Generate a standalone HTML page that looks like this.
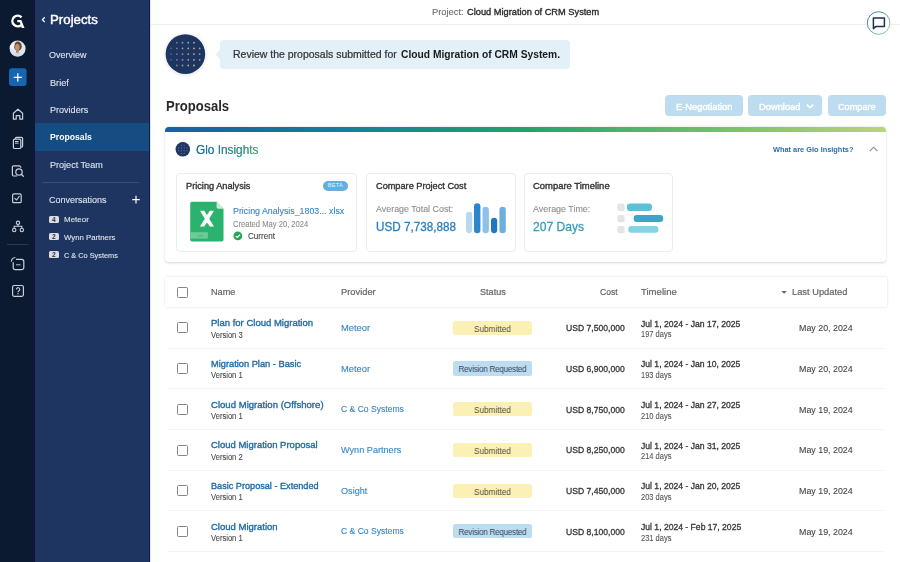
<!DOCTYPE html>
<html><head><meta charset="utf-8"><title>Proposals</title><style>
*{margin:0;padding:0;box-sizing:border-box}
html,body{width:900px;height:562px;overflow:hidden;background:#fff;font-family:"Liberation Sans", sans-serif}
.abs{position:absolute}
.t{position:absolute;white-space:nowrap;line-height:1;}
.badge{left:48.8px;width:10px;height:7.2px;background:#d9dee6;border-radius:1.5px;color:#333;font-size:6.5px;line-height:7.2px;text-align:center;font-weight:700}
.btn{top:94.7px;height:21.8px;border-radius:4px;background:#bddcef}
.card{top:172.6px;height:79px;border:1px solid #ececec;border-radius:4px;background:#fff}
.cb{width:11px;height:11px;border:1.5px solid #858585;border-radius:1.5px}
.pill{left:452.7px;width:79.5px;height:14.2px;border-radius:2.5px;font-size:8.2px;line-height:17.2px;text-align:center;white-space:nowrap}
</style></head>
<body>
<div class="abs" style="left:0;top:0;width:35px;height:562px;background:#0b1a31"></div>
<div class="abs" style="left:32px;top:0;width:3px;height:562px;background:#0c1838"></div>
<div class="abs" style="left:35px;top:0;width:2px;height:562px;background:#233258"></div>
<div class="abs" style="left:37px;top:0;width:113px;height:562px;background:#1d3560"></div>
<div class="abs" style="left:35px;top:123px;width:115px;height:27.5px;background:#154c82"></div>
<div class="abs" style="left:149px;top:0;width:1px;height:562px;background:#102045"></div>

<svg class="abs" style="left:0;top:0" width="35" height="562" viewBox="0 0 35 562">
  <!-- G logo -->
  <path d="M21.5 17.3 A5.3 5.3 0 1 0 21.4 24.8" fill="none" stroke="#fff" stroke-width="2.4"/>
  <path d="M17.3 20.0 H21.3 L24.5 27.9 H21.7 L19.9 22.3 H17.3 Z" fill="#fff"/>
  <!-- plus btn -->
  <rect x="9" y="68.3" width="17.6" height="17.6" rx="3" fill="#1565b0"/>
  <path d="M17.8 73.3v8.2M13.7 77.4h8.2" stroke="#fff" stroke-width="1.3"/>
  <!-- home -->
  <path d="M13.4 119.2 V113.2 L18 109.2 L22.6 113.2 V119.2 H19.8 V115.6 H16.2 V119.2 Z" fill="none" stroke="#c9cfdb" stroke-width="1.2" stroke-linejoin="round"/>
  <!-- docs -->
  <rect x="13.4" y="139.2" width="7.4" height="9.3" rx="1.3" fill="none" stroke="#c9cfdb" stroke-width="1.2"/>
  <path d="M15.4 139 V138.6 a1.2 1.2 0 0 1 1.2-1.2 H21.4 a1.2 1.2 0 0 1 1.2 1.2 V146 a1.2 1.2 0 0 1 -1.2 1.2 H21" fill="none" stroke="#c9cfdb" stroke-width="1.2"/>
  <path d="M15 141.5 h3.5 M15 143.2 h3.5" stroke="#c9cfdb" stroke-width="1"/>
  <!-- search doc -->
  <path d="M17 176 H13.6 a1.2 1.2 0 0 1 -1.2 -1.2 V167 a1.2 1.2 0 0 1 1.2 -1.2 H19.6 L21.2 167.6" fill="none" stroke="#c9cfdb" stroke-width="1.2"/>
  <circle cx="19" cy="172" r="3.2" fill="none" stroke="#c9cfdb" stroke-width="1.2"/>
  <path d="M21.3 174.3 L23.3 176.3" stroke="#c9cfdb" stroke-width="1.3" stroke-linecap="round"/>
  <!-- checkbox -->
  <rect x="12.6" y="193.9" width="8.6" height="8.8" rx="1.3" fill="none" stroke="#c9cfdb" stroke-width="1.2"/>
  <path d="M14.8 198.4 L16.6 200 L19.2 196.4" fill="none" stroke="#c9cfdb" stroke-width="1.1" stroke-linecap="round" stroke-linejoin="round"/>
  <!-- org chart -->
  <circle cx="18" cy="222.8" r="1.7" fill="none" stroke="#c9cfdb" stroke-width="1.1"/>
  <circle cx="14.2" cy="230" r="1.7" fill="none" stroke="#c9cfdb" stroke-width="1.1"/>
  <circle cx="21.8" cy="230" r="1.7" fill="none" stroke="#c9cfdb" stroke-width="1.1"/>
  <path d="M18 224.5 V226.3 M14.2 228.3 V226.3 H21.8 V228.3" fill="none" stroke="#c9cfdb" stroke-width="1.1"/>
  <!-- separator -->
  <path d="M7 244.5 H28.5" stroke="#2a3a57" stroke-width="1"/>
  <!-- chat rotate -->
  <path d="M16 259.4 H21.7 a2.1 2.1 0 0 1 2.1 2.1 V267.6 a2.1 2.1 0 0 1 -2.1 2.1 H15.3 a2.1 2.1 0 0 1 -2.1 -2.1 V262.2" fill="none" stroke="#c9cfdb" stroke-width="1.2"/>
  <path d="M11.3 261.6 a4.6 4.6 0 0 1 4.1 -4.1" fill="none" stroke="#c9cfdb" stroke-width="1.1"/>
  <path d="M16 264.8 h4.6" stroke="#c9cfdb" stroke-width="0.9"/>
  <!-- help -->
  <rect x="12.6" y="285.5" width="10.8" height="10.8" rx="1.5" fill="none" stroke="#c9cfdb" stroke-width="1.2"/>
  <path d="M16.4 289.4 a1.7 1.7 0 1 1 2.6 1.4 c-0.7 0.4 -1 0.8 -1 1.4" fill="none" stroke="#c9cfdb" stroke-width="1.1"/>
  <circle cx="18" cy="293.8" r="0.7" fill="#c9cfdb"/>
</svg>

<svg class="abs" style="left:6px;top:37px" width="23" height="23">
  <defs><clipPath id="avc"><circle cx="11.6" cy="11.6" r="8"/></clipPath></defs>
  <circle cx="11.6" cy="11.6" r="8" fill="#dfe6ee"/>
  <g clip-path="url(#avc)">
    <ellipse cx="11.9" cy="9.2" rx="3.9" ry="4.6" fill="#6e4b34"/>
    <ellipse cx="11.3" cy="10.2" rx="2.2" ry="3.2" fill="#c09474"/>
    <path d="M10.3 12.5 L12.4 12.5 L12.9 16.5 L9.9 16.5 Z" fill="#b0876a"/>
    <ellipse cx="11.6" cy="20" rx="6.5" ry="4.2" fill="#cfdbe8"/>
    <ellipse cx="6" cy="8" rx="2.5" ry="4" fill="#f2f4f7"/>
  </g>
</svg>


<svg class="abs" style="left:35px;top:0" width="115" height="562">
  <path d="M9.7 17.3 L7.4 19.7 L9.7 22.1" fill="none" stroke="#fff" stroke-width="1.3"/>
  <path d="M7 182.6 H104.5" stroke="#3a5080" stroke-width="1"/>
  <path d="M97.2 199.6 h7.6 M101 195.8 v7.6" stroke="#fff" stroke-width="1.2"/>
</svg>
<div class="abs badge" style="top:216px">4</div>
<div class="abs badge" style="top:233.2px">2</div>
<div class="abs badge" style="top:251px">2</div>


<div class="abs" style="left:150px;top:0;width:1px;height:562px;background:#dce3f0"></div>
<div class="abs" style="left:151px;top:23.5px;width:749px;height:1px;background:#eeeeee"></div>
<svg class="abs" style="left:860px;top:5px" width="40" height="40">
  <defs><linearGradient id="cg" x1="0" y1="0" x2="1" y2="1"><stop offset="0" stop-color="#2d6fb0"/><stop offset="1" stop-color="#9fd19a"/></linearGradient></defs>
  <circle cx="18.6" cy="18" r="11.3" fill="#fff" stroke="url(#cg)" stroke-width="1"/>
  <path d="M13.4 13 H24.4 V21.6 H15.6 L13.4 23.6 Z" fill="none" stroke="#1f2e56" stroke-width="1.5" stroke-linejoin="round"/>
</svg>
<svg class="abs" style="left:160px;top:29px" width="52" height="52">
  <defs><filter id="sh" x="-30%" y="-30%" width="160%" height="160%"><feGaussianBlur stdDeviation="1.5"/></filter></defs>
  <circle cx="25.4" cy="25.6" r="20.6" fill="#000" opacity="0.12" filter="url(#sh)"/>
  <circle cx="25.4" cy="25.1" r="20.4" fill="#fff"/>
  <circle cx="25.4" cy="25.1" r="19.8" fill="#1e3461"/>
  <circle cx="16.85" cy="13.70" r="0.9" fill="#74859a"/><circle cx="22.55" cy="13.70" r="0.9" fill="#96a08e"/><circle cx="28.25" cy="13.70" r="0.9" fill="#abaf88"/><circle cx="33.95" cy="13.70" r="0.9" fill="#bbb682"/><circle cx="11.15" cy="19.40" r="0.9" fill="#53698f"/><circle cx="16.85" cy="19.40" r="0.9" fill="#74859a"/><circle cx="22.55" cy="19.40" r="0.9" fill="#96a08e"/><circle cx="28.25" cy="19.40" r="0.9" fill="#abaf88"/><circle cx="33.95" cy="19.40" r="0.9" fill="#bbb682"/><circle cx="39.65" cy="19.40" r="0.9" fill="#aaa37e"/><circle cx="11.15" cy="25.10" r="0.9" fill="#53698f"/><circle cx="16.85" cy="25.10" r="0.9" fill="#74859a"/><circle cx="22.55" cy="25.10" r="0.9" fill="#96a08e"/><circle cx="28.25" cy="25.10" r="0.9" fill="#abaf88"/><circle cx="33.95" cy="25.10" r="0.9" fill="#bbb682"/><circle cx="39.65" cy="25.10" r="0.9" fill="#aaa37e"/><circle cx="11.15" cy="30.80" r="0.9" fill="#53698f"/><circle cx="16.85" cy="30.80" r="0.9" fill="#74859a"/><circle cx="22.55" cy="30.80" r="0.9" fill="#96a08e"/><circle cx="28.25" cy="30.80" r="0.9" fill="#abaf88"/><circle cx="33.95" cy="30.80" r="0.9" fill="#bbb682"/><circle cx="39.65" cy="30.80" r="0.9" fill="#aaa37e"/><circle cx="16.85" cy="36.50" r="0.9" fill="#74859a"/><circle cx="22.55" cy="36.50" r="0.9" fill="#96a08e"/><circle cx="28.25" cy="36.50" r="0.9" fill="#abaf88"/><circle cx="33.95" cy="36.50" r="0.9" fill="#bbb682"/>
</svg>
<div class="abs" style="left:220px;top:40.3px;width:350px;height:28.5px;background:#e3f0f8;border-radius:4px"></div>
<svg class="abs" style="left:212px;top:45px" width="10" height="18"><path d="M8.5 3.5 L3.8 9.4 L8.5 15.3 Z" fill="#e4f0f9"/></svg>


<div class="abs btn" style="left:665px;width:77.5px"></div>
<div class="abs btn" style="left:748px;width:74.2px"></div>
<div class="abs btn" style="left:827.5px;width:58.5px"></div>
<svg class="abs" style="left:800px;top:95px" width="20" height="22"><path d="M6.8 9.6 L10 12.6 L13.2 9.6" fill="none" stroke="#fff" stroke-width="1.5"/></svg>


<div class="abs" style="left:165px;top:127px;width:721px;height:135px;border-radius:4px;background:#fff;box-shadow:0 0.6px 2.5px rgba(0,0,0,0.17)"></div>
<div class="abs" style="left:165px;top:127px;width:721px;height:5px;border-radius:4px 4px 0 0;background:linear-gradient(90deg,#1860a2 0%,#137f98 25%,#22a36b 50%,#70bd6d 75%,#bdd27b 100%)"></div>
<svg class="abs" style="left:170px;top:137px" width="26" height="26">
  <circle cx="12.8" cy="12.3" r="7.9" fill="#eef2f7"/>
  <circle cx="12.8" cy="12.3" r="7.2" fill="#1e3461"/>
  <circle cx="11.43" cy="8.18" r="0.7" fill="#4f6d99"/><circle cx="14.18" cy="8.18" r="0.7" fill="#4f6d99"/><circle cx="8.68" cy="10.93" r="0.7" fill="#4f6d99"/><circle cx="11.43" cy="10.93" r="0.7" fill="#4f6d99"/><circle cx="14.18" cy="10.93" r="0.7" fill="#4f6d99"/><circle cx="16.93" cy="10.93" r="0.7" fill="#4f6d99"/><circle cx="8.68" cy="13.68" r="0.7" fill="#4f6d99"/><circle cx="11.43" cy="13.68" r="0.7" fill="#4f6d99"/><circle cx="14.18" cy="13.68" r="0.7" fill="#4f6d99"/><circle cx="16.93" cy="13.68" r="0.7" fill="#4f6d99"/><circle cx="11.43" cy="16.43" r="0.7" fill="#4f6d99"/><circle cx="14.18" cy="16.43" r="0.7" fill="#4f6d99"/>
</svg>
<svg class="abs" style="left:860px;top:140px" width="24" height="20"><path d="M9.8 11.2 L13.6 7.2 L17.4 11.2" fill="none" stroke="#8a8a8a" stroke-width="1.1"/></svg>
<div class="abs card" style="left:175.9px;width:181.5px"></div>
<div class="abs card" style="left:365.5px;width:150px"></div>
<div class="abs card" style="left:523.8px;width:149.2px"></div>
<div class="abs" style="left:322.8px;top:181.3px;width:25.3px;height:9.5px;border-radius:5px;background:#62afe0;color:#e6f3fb;font-size:5.6px;line-height:9.5px;text-align:center;font-weight:400;letter-spacing:0.3px">BETA</div>
<svg class="abs" style="left:188px;top:200px" width="40" height="45">
  <path d="M4 1.8 H28.6 L35.5 8.7 V39.8 a1.8 1.8 0 0 1 -1.8 1.8 H4 a1.8 1.8 0 0 1 -1.8 -1.8 V3.6 a1.8 1.8 0 0 1 1.8 -1.8 Z" fill="#2bb26f"/>
  <path d="M28.6 1.8 V7 a1.7 1.7 0 0 0 1.7 1.7 H35.5 Z" fill="#cfe9d9"/>
  <path d="M2.2 32.2 H19.9 V38.6 H2.2 Z" fill="#6ccb98"/>
  <path d="M10 35.8 h5" stroke="#4aa878" stroke-width="0.8"/>
  <path d="M12 10.8 L16.2 10.8 L19 14.9 L21.8 10.8 L26 10.8 L21.2 18.7 L26 26.6 L21.8 26.6 L19 22.5 L16.2 26.6 L12 26.6 L16.8 18.7 Z" fill="#fff"/>
</svg>
<svg class="abs" style="left:230px;top:228px" width="16" height="16"><circle cx="7.85" cy="7.9" r="4.4" fill="#2aa35a"/><path d="M5.7 8 L7.3 9.5 L10.1 6.6" fill="none" stroke="#fff" stroke-width="1.2"/></svg>
<svg class="abs" style="left:462px;top:200px" width="50" height="38">
  <rect x="4" y="11.8" width="6.2" height="21.4" rx="3.1" fill="#b9d8ef"/>
  <rect x="12" y="3.2" width="6.4" height="30" rx="3.2" fill="#2b86cb"/>
  <rect x="20.5" y="6.8" width="6.4" height="26.4" rx="3.2" fill="#8fc1e6"/>
  <rect x="29" y="17.8" width="6.2" height="15.4" rx="3.1" fill="#1f78bf"/>
  <rect x="37.4" y="6.8" width="6.4" height="26.4" rx="3.2" fill="#6db0e0"/>
</svg>
<svg class="abs" style="left:614px;top:200px" width="52" height="36">
  <rect x="3.3" y="3.6" width="7.3" height="7.3" rx="2" fill="#e4e4e4"/>
  <rect x="3.3" y="14.9" width="7.3" height="7.3" rx="2" fill="#e4e4e4"/>
  <rect x="3.3" y="26" width="7.3" height="7.3" rx="2" fill="#e4e4e4"/>
  <rect x="12.9" y="3.5" width="25.1" height="7.4" rx="3.2" fill="#5cc1d7"/>
  <rect x="19.7" y="14.9" width="29.5" height="7" rx="3" fill="#3ba7c5"/>
  <rect x="14.3" y="26" width="30.1" height="6.8" rx="3" fill="#82d3e3"/>
</svg>

<div class="abs" style="left:165px;top:277px;width:721.5px;height:30.3px;background:#fff;border-radius:1px;box-shadow:0 0 2.5px rgba(0,0,0,0.16)"></div><div class="abs cb" style="left:177.2px;top:286.80px"></div><svg class="abs" style="left:778px;top:287px" width="12" height="10"><path d="M3.4 4 H8.8 L6.1 6.8 Z" fill="#666"/></svg><div class="abs cb" style="left:177.2px;top:322.40px"></div><div class="abs" style="left:168px;top:347.50px;width:716px;height:1px;background:#f4f4f4"></div><div class="abs pill" style="top:320.70px;background:#fbf1b4;color:#57523f;letter-spacing:0">Submitted</div><div class="abs cb" style="left:177.2px;top:363.10px"></div><div class="abs" style="left:168px;top:388.20px;width:716px;height:1px;background:#f4f4f4"></div><div class="abs pill" style="top:361.40px;background:#bcdcf0;color:#3a4d66;letter-spacing:-0.3px">Revision Requested</div><div class="abs cb" style="left:177.2px;top:403.80px"></div><div class="abs" style="left:168px;top:428.90px;width:716px;height:1px;background:#f4f4f4"></div><div class="abs pill" style="top:402.10px;background:#fbf1b4;color:#57523f;letter-spacing:0">Submitted</div><div class="abs cb" style="left:177.2px;top:444.50px"></div><div class="abs" style="left:168px;top:469.60px;width:716px;height:1px;background:#f4f4f4"></div><div class="abs pill" style="top:442.80px;background:#fbf1b4;color:#57523f;letter-spacing:0">Submitted</div><div class="abs cb" style="left:177.2px;top:485.20px"></div><div class="abs" style="left:168px;top:510.30px;width:716px;height:1px;background:#f4f4f4"></div><div class="abs pill" style="top:483.50px;background:#fbf1b4;color:#57523f;letter-spacing:0">Submitted</div><div class="abs cb" style="left:177.2px;top:525.90px"></div><div class="abs" style="left:168px;top:551.00px;width:716px;height:1px;background:#f4f4f4"></div><div class="abs pill" style="top:524.20px;background:#bcdcf0;color:#3a4d66;letter-spacing:-0.3px">Revision Requested</div>
<span class="t" id="t0" style="left:49.70px;top:14.41px;font-size:12.8px;font-weight:400;color:#ffffff;-webkit-text-stroke:0.4px #ffffff;transform:scaleX(1.0363);transform-origin:-0.0px 0;">Projects</span>
<span class="t" id="t1" style="left:49.30px;top:50.21px;font-size:9.4px;font-weight:400;color:#dfe4ee;-webkit-text-stroke:0.1px #dfe4ee;transform:scaleX(0.9593);transform-origin:-0.0px 0;">Overview</span>
<span class="t" id="t2" style="left:49.50px;top:77.51px;font-size:9.4px;font-weight:400;color:#dfe4ee;-webkit-text-stroke:0.1px #dfe4ee;transform:scaleX(0.9762);transform-origin:-0.0px 0;">Brief</span>
<span class="t" id="t3" style="left:49.50px;top:104.51px;font-size:9.4px;font-weight:400;color:#dfe4ee;-webkit-text-stroke:0.1px #dfe4ee;transform:scaleX(0.9645);transform-origin:-0.0px 0;">Providers</span>
<span class="t" id="t4" style="left:49.50px;top:132.21px;font-size:9.4px;font-weight:700;color:#ffffff;transform:scaleX(0.9241);transform-origin:-0.0px 0;">Proposals</span>
<span class="t" id="t5" style="left:49.50px;top:159.91px;font-size:9.4px;font-weight:400;color:#dfe4ee;-webkit-text-stroke:0.1px #dfe4ee;transform:scaleX(0.9670);transform-origin:-0.0px 0;">Project Team</span>
<span class="t" id="t6" style="left:49.20px;top:194.91px;font-size:9.4px;font-weight:400;color:#dfe4ee;-webkit-text-stroke:0.1px #dfe4ee;transform:scaleX(0.9607);transform-origin:-0.0px 0;">Conversations</span>
<span class="t" id="t7" style="left:63.90px;top:216.31px;font-size:7.8px;font-weight:400;color:#dfe4ee;-webkit-text-stroke:0.1px #dfe4ee;transform:scaleX(1.0223);transform-origin:-0.0px 0;">Meteor</span>
<span class="t" id="t8" style="left:63.90px;top:233.81px;font-size:7.8px;font-weight:400;color:#dfe4ee;-webkit-text-stroke:0.1px #dfe4ee;transform:scaleX(0.9977);transform-origin:-0.0px 0;">Wynn Partners</span>
<span class="t" id="t9" style="left:63.90px;top:251.51px;font-size:7.8px;font-weight:400;color:#dfe4ee;-webkit-text-stroke:0.1px #dfe4ee;transform:scaleX(0.9422);transform-origin:-0.0px 0;">C &amp; Co Systems</span>
<span class="t" id="t10" style="left:432.20px;top:7.80px;font-size:9.3px;font-weight:400;color:#6b6b6b;-webkit-text-stroke:0.1px #6b6b6b;transform:scaleX(1.0023);transform-origin:-0.0px 0;">Project:</span>
<span class="t" id="t11" style="left:466.70px;top:7.80px;font-size:9.3px;font-weight:400;color:#2b2b2b;-webkit-text-stroke:0.35px #2b2b2b;transform:scaleX(0.9955);transform-origin:-0.0px 0;">Cloud Migration of CRM System</span>
<span class="t" id="t12" style="left:233.40px;top:49.81px;font-size:10.0px;font-weight:400;color:#333333;-webkit-text-stroke:0.22px #333333;transform:scaleX(1.0485);transform-origin:-0.0px 0;">Review the proposals submitted for</span>
<span class="t" id="t13" style="left:401.00px;top:49.81px;font-size:10.0px;font-weight:700;color:#1a1a1a;transform:scaleX(1.0258);transform-origin:-0.0px 0;">Cloud Migration of CRM System.</span>
<span class="t" id="t14" style="left:165.90px;top:99.01px;font-size:14px;font-weight:700;color:#2a2a2a;transform:scaleX(0.9322);transform-origin:-0.0px 0;">Proposals</span>
<span class="t" id="t15" style="left:675.50px;top:101.50px;font-size:9.8px;font-weight:400;color:#ffffff;-webkit-text-stroke:0.4px #ffffff;transform:scaleX(0.9500);transform-origin:-0.0px 0;">E-Negotiation</span>
<span class="t" id="t16" style="left:758.50px;top:101.50px;font-size:9.8px;font-weight:400;color:#ffffff;-webkit-text-stroke:0.4px #ffffff;transform:scaleX(0.9508);transform-origin:-0.0px 0;">Download</span>
<span class="t" id="t17" style="left:837.70px;top:101.50px;font-size:9.8px;font-weight:400;color:#ffffff;-webkit-text-stroke:0.4px #ffffff;transform:scaleX(0.9355);transform-origin:-0.0px 0;">Compare</span>
<span class="t" id="t18" style="left:195.80px;top:144.20px;font-size:12.4px;font-weight:400;color:#1f6fa5;transform:scaleX(0.9547);transform-origin:-0.0px 0;background:linear-gradient(90deg,#1d6aa8,#2f9d8a 70%,#3fae78);-webkit-background-clip:text;background-clip:text;color:transparent;">Glo Insights</span>
<span class="t" id="t19" style="left:196.20px;top:144.20px;font-size:12.4px;font-weight:400;color:#1f6fa5;transform:scaleX(0.9547);transform-origin:-0.0px 0;background:linear-gradient(90deg,#1d6aa8,#2f9d8a 70%,#3fae78);-webkit-background-clip:text;background-clip:text;color:transparent;">Glo Insights</span>
<span class="t" id="t20" style="left:772.80px;top:146.21px;font-size:7.8px;font-weight:700;color:#2a6ea6;transform:scaleX(0.9477);transform-origin:-0.0px 0;">What are Glo Insights?</span>
<span class="t" id="t21" style="left:185.70px;top:181.61px;font-size:9.0px;font-weight:400;color:#333333;-webkit-text-stroke:0.35px #333333;transform:scaleX(1.0222);transform-origin:-0.0px 0;">Pricing Analysis</span>
<span class="t" id="t22" style="left:232.80px;top:206.21px;font-size:9.4px;font-weight:400;color:#3584c4;-webkit-text-stroke:0.1px #3584c4;transform:scaleX(0.9400);transform-origin:-0.0px 0;">Pricing Analysis_1803... xlsx</span>
<span class="t" id="t23" style="left:232.80px;top:219.81px;font-size:8.3px;font-weight:400;color:#8c8c8c;-webkit-text-stroke:0.1px #8c8c8c;transform:scaleX(0.9170);transform-origin:-0.0px 0;">Created May 20, 2024</span>
<span class="t" id="t24" style="left:247.60px;top:232.22px;font-size:8.6px;font-weight:400;color:#444444;-webkit-text-stroke:0.1px #444444;transform:scaleX(0.9416);transform-origin:-0.0px 0;">Current</span>
<span class="t" id="t25" style="left:376.10px;top:181.61px;font-size:9.0px;font-weight:400;color:#333333;-webkit-text-stroke:0.35px #333333;transform:scaleX(1.0195);transform-origin:-0.0px 0;">Compare Project Cost</span>
<span class="t" id="t26" style="left:376.10px;top:204.51px;font-size:9.0px;font-weight:400;color:#8c8c8c;-webkit-text-stroke:0.1px #8c8c8c;transform:scaleX(0.9884);transform-origin:-0.0px 0;">Average Total Cost:</span>
<span class="t" id="t27" style="left:376.10px;top:220.00px;font-size:13px;font-weight:400;color:#2a7fc0;-webkit-text-stroke:0.3px #2a7fc0;transform:scaleX(0.8989);transform-origin:-0.0px 0;">USD 7,738,888</span>
<span class="t" id="t28" style="left:533.30px;top:181.61px;font-size:9.0px;font-weight:400;color:#333333;-webkit-text-stroke:0.35px #333333;transform:scaleX(1.0493);transform-origin:-0.0px 0;">Compare Timeline</span>
<span class="t" id="t29" style="left:533.30px;top:204.51px;font-size:9.0px;font-weight:400;color:#8c8c8c;-webkit-text-stroke:0.1px #8c8c8c;transform:scaleX(0.9902);transform-origin:-0.0px 0;">Average Time:</span>
<span class="t" id="t30" style="left:533.30px;top:220.00px;font-size:13px;font-weight:400;color:#3a9ab8;-webkit-text-stroke:0.3px #3a9ab8;transform:scaleX(0.9307);transform-origin:-0.0px 0;">207 Days</span>
<span class="t" id="t31" style="left:210.70px;top:287.31px;font-size:9.7px;font-weight:400;color:#666666;-webkit-text-stroke:0.22px #666666;transform:scaleX(0.9457);transform-origin:-0.0px 0;">Name</span>
<span class="t" id="t32" style="left:340.80px;top:287.31px;font-size:9.7px;font-weight:400;color:#666666;-webkit-text-stroke:0.22px #666666;transform:scaleX(0.9628);transform-origin:-0.0px 0;">Provider</span>
<span class="t" id="t33" style="left:480.00px;top:287.31px;font-size:9.7px;font-weight:400;color:#666666;-webkit-text-stroke:0.22px #666666;transform:scaleX(0.9380);transform-origin:-0.0px 0;">Status</span>
<span class="t" id="t34" style="left:599.50px;top:287.31px;font-size:9.7px;font-weight:400;color:#666666;-webkit-text-stroke:0.22px #666666;transform:scaleX(0.8832);transform-origin:-0.0px 0;">Cost</span>
<span class="t" id="t35" style="left:640.50px;top:287.31px;font-size:9.7px;font-weight:400;color:#666666;-webkit-text-stroke:0.22px #666666;transform:scaleX(0.9864);transform-origin:-0.0px 0;">Timeline</span>
<span class="t" id="t36" style="left:792.00px;top:287.31px;font-size:9.7px;font-weight:400;color:#666666;-webkit-text-stroke:0.22px #666666;transform:scaleX(0.9614);transform-origin:-0.0px 0;">Last Updated</span>
<span class="t" id="t37" style="left:210.50px;top:318.10px;font-size:9.6px;font-weight:400;color:#1f6aa6;-webkit-text-stroke:0.35px #1f6aa6;transform:scaleX(0.9917);transform-origin:-0.0px 0;">Plan for Cloud Migration</span>
<span class="t" id="t38" style="left:210.50px;top:330.51px;font-size:8.3px;font-weight:400;color:#484848;-webkit-text-stroke:0.1px #484848;transform:scaleX(0.9161);transform-origin:-0.0px 0;">Version 3</span>
<span class="t" id="t39" style="left:340.80px;top:322.81px;font-size:9.5px;font-weight:400;color:#3685c4;-webkit-text-stroke:0.1px #3685c4;transform:scaleX(0.9850);transform-origin:-0.0px 0;">Meteor</span>
<span class="t" id="t40" style="left:565.80px;top:323.10px;font-size:9.6px;font-weight:400;color:#3a3a3a;-webkit-text-stroke:0.35px #3a3a3a;transform:scaleX(0.8953);transform-origin:-0.0px 0;">USD 7,500,000</span>
<span class="t" id="t41" style="left:640.50px;top:318.61px;font-size:9.5px;font-weight:400;color:#3a3a3a;-webkit-text-stroke:0.35px #3a3a3a;transform:scaleX(0.9046);transform-origin:-0.0px 0;">Jul 1, 2024 - Jan 17, 2025</span>
<span class="t" id="t42" style="left:640.50px;top:330.31px;font-size:8.3px;font-weight:400;color:#555555;-webkit-text-stroke:0.1px #555555;transform:scaleX(0.9024);transform-origin:-0.0px 0;">197 days</span>
<span class="t" id="t43" style="left:799.00px;top:323.21px;font-size:9.5px;font-weight:400;color:#444444;-webkit-text-stroke:0.1px #444444;transform:scaleX(0.9329);transform-origin:-0.0px 0;">May 20, 2024</span>
<span class="t" id="t44" style="left:210.50px;top:358.81px;font-size:9.6px;font-weight:400;color:#1f6aa6;-webkit-text-stroke:0.35px #1f6aa6;transform:scaleX(0.9657);transform-origin:-0.0px 0;">Migration Plan - Basic</span>
<span class="t" id="t45" style="left:210.50px;top:371.21px;font-size:8.3px;font-weight:400;color:#484848;-webkit-text-stroke:0.1px #484848;transform:scaleX(0.9161);transform-origin:-0.0px 0;">Version 1</span>
<span class="t" id="t46" style="left:340.80px;top:363.51px;font-size:9.5px;font-weight:400;color:#3685c4;-webkit-text-stroke:0.1px #3685c4;transform:scaleX(0.9850);transform-origin:-0.0px 0;">Meteor</span>
<span class="t" id="t47" style="left:565.80px;top:363.81px;font-size:9.6px;font-weight:400;color:#3a3a3a;-webkit-text-stroke:0.35px #3a3a3a;transform:scaleX(0.8953);transform-origin:-0.0px 0;">USD 6,900,000</span>
<span class="t" id="t48" style="left:640.50px;top:359.31px;font-size:9.5px;font-weight:400;color:#3a3a3a;-webkit-text-stroke:0.35px #3a3a3a;transform:scaleX(0.9046);transform-origin:-0.0px 0;">Jul 1, 2024 - Jan 10, 2025</span>
<span class="t" id="t49" style="left:640.50px;top:371.01px;font-size:8.3px;font-weight:400;color:#555555;-webkit-text-stroke:0.1px #555555;transform:scaleX(0.9024);transform-origin:-0.0px 0;">193 days</span>
<span class="t" id="t50" style="left:799.00px;top:363.91px;font-size:9.5px;font-weight:400;color:#444444;-webkit-text-stroke:0.1px #444444;transform:scaleX(0.9329);transform-origin:-0.0px 0;">May 20, 2024</span>
<span class="t" id="t51" style="left:210.50px;top:399.51px;font-size:9.6px;font-weight:400;color:#1f6aa6;-webkit-text-stroke:0.35px #1f6aa6;transform:scaleX(0.9974);transform-origin:-0.0px 0;">Cloud Migration (Offshore)</span>
<span class="t" id="t52" style="left:210.50px;top:411.91px;font-size:8.3px;font-weight:400;color:#484848;-webkit-text-stroke:0.1px #484848;transform:scaleX(0.9161);transform-origin:-0.0px 0;">Version 1</span>
<span class="t" id="t53" style="left:340.80px;top:404.21px;font-size:9.5px;font-weight:400;color:#3685c4;-webkit-text-stroke:0.1px #3685c4;transform:scaleX(0.9028);transform-origin:-0.0px 0;">C &amp; Co Systems</span>
<span class="t" id="t54" style="left:565.80px;top:404.51px;font-size:9.6px;font-weight:400;color:#3a3a3a;-webkit-text-stroke:0.35px #3a3a3a;transform:scaleX(0.8953);transform-origin:-0.0px 0;">USD 8,750,000</span>
<span class="t" id="t55" style="left:640.50px;top:400.01px;font-size:9.5px;font-weight:400;color:#3a3a3a;-webkit-text-stroke:0.35px #3a3a3a;transform:scaleX(0.9046);transform-origin:-0.0px 0;">Jul 1, 2024 - Jan 27, 2025</span>
<span class="t" id="t56" style="left:640.50px;top:411.71px;font-size:8.3px;font-weight:400;color:#555555;-webkit-text-stroke:0.1px #555555;transform:scaleX(0.9024);transform-origin:-0.0px 0;">210 days</span>
<span class="t" id="t57" style="left:799.00px;top:404.61px;font-size:9.5px;font-weight:400;color:#444444;-webkit-text-stroke:0.1px #444444;transform:scaleX(0.9329);transform-origin:-0.0px 0;">May 19, 2024</span>
<span class="t" id="t58" style="left:210.50px;top:440.20px;font-size:9.6px;font-weight:400;color:#1f6aa6;-webkit-text-stroke:0.35px #1f6aa6;transform:scaleX(0.9893);transform-origin:-0.0px 0;">Cloud Migration Proposal</span>
<span class="t" id="t59" style="left:210.50px;top:452.61px;font-size:8.3px;font-weight:400;color:#484848;-webkit-text-stroke:0.1px #484848;transform:scaleX(0.9161);transform-origin:-0.0px 0;">Version 2</span>
<span class="t" id="t60" style="left:340.80px;top:444.91px;font-size:9.5px;font-weight:400;color:#3685c4;-webkit-text-stroke:0.1px #3685c4;transform:scaleX(0.9610);transform-origin:-0.0px 0;">Wynn Partners</span>
<span class="t" id="t61" style="left:565.80px;top:445.20px;font-size:9.6px;font-weight:400;color:#3a3a3a;-webkit-text-stroke:0.35px #3a3a3a;transform:scaleX(0.8953);transform-origin:-0.0px 0;">USD 8,250,000</span>
<span class="t" id="t62" style="left:640.50px;top:440.71px;font-size:9.5px;font-weight:400;color:#3a3a3a;-webkit-text-stroke:0.35px #3a3a3a;transform:scaleX(0.9046);transform-origin:-0.0px 0;">Jul 1, 2024 - Jan 31, 2025</span>
<span class="t" id="t63" style="left:640.50px;top:452.41px;font-size:8.3px;font-weight:400;color:#555555;-webkit-text-stroke:0.1px #555555;transform:scaleX(0.9024);transform-origin:-0.0px 0;">214 days</span>
<span class="t" id="t64" style="left:799.00px;top:445.31px;font-size:9.5px;font-weight:400;color:#444444;-webkit-text-stroke:0.1px #444444;transform:scaleX(0.9329);transform-origin:-0.0px 0;">May 19, 2024</span>
<span class="t" id="t65" style="left:210.50px;top:480.91px;font-size:9.6px;font-weight:400;color:#1f6aa6;-webkit-text-stroke:0.35px #1f6aa6;transform:scaleX(0.9517);transform-origin:-0.0px 0;">Basic Proposal - Extended</span>
<span class="t" id="t66" style="left:210.50px;top:493.31px;font-size:8.3px;font-weight:400;color:#484848;-webkit-text-stroke:0.1px #484848;transform:scaleX(0.9161);transform-origin:-0.0px 0;">Version 1</span>
<span class="t" id="t67" style="left:340.80px;top:485.61px;font-size:9.5px;font-weight:400;color:#3685c4;-webkit-text-stroke:0.1px #3685c4;transform:scaleX(0.9617);transform-origin:-0.0px 0;">Osight</span>
<span class="t" id="t68" style="left:565.80px;top:485.91px;font-size:9.6px;font-weight:400;color:#3a3a3a;-webkit-text-stroke:0.35px #3a3a3a;transform:scaleX(0.8953);transform-origin:-0.0px 0;">USD 7,450,000</span>
<span class="t" id="t69" style="left:640.50px;top:481.41px;font-size:9.5px;font-weight:400;color:#3a3a3a;-webkit-text-stroke:0.35px #3a3a3a;transform:scaleX(0.9046);transform-origin:-0.0px 0;">Jul 1, 2024 - Jan 20, 2025</span>
<span class="t" id="t70" style="left:640.50px;top:493.11px;font-size:8.3px;font-weight:400;color:#555555;-webkit-text-stroke:0.1px #555555;transform:scaleX(0.9024);transform-origin:-0.0px 0;">203 days</span>
<span class="t" id="t71" style="left:799.00px;top:486.01px;font-size:9.5px;font-weight:400;color:#444444;-webkit-text-stroke:0.1px #444444;transform:scaleX(0.9329);transform-origin:-0.0px 0;">May 19, 2024</span>
<span class="t" id="t72" style="left:210.50px;top:521.60px;font-size:9.6px;font-weight:400;color:#1f6aa6;-webkit-text-stroke:0.35px #1f6aa6;transform:scaleX(0.9912);transform-origin:-0.0px 0;">Cloud Migration</span>
<span class="t" id="t73" style="left:210.50px;top:534.01px;font-size:8.3px;font-weight:400;color:#484848;-webkit-text-stroke:0.1px #484848;transform:scaleX(0.9161);transform-origin:-0.0px 0;">Version 1</span>
<span class="t" id="t74" style="left:340.80px;top:526.31px;font-size:9.5px;font-weight:400;color:#3685c4;-webkit-text-stroke:0.1px #3685c4;transform:scaleX(0.9028);transform-origin:-0.0px 0;">C &amp; Co Systems</span>
<span class="t" id="t75" style="left:565.80px;top:526.60px;font-size:9.6px;font-weight:400;color:#3a3a3a;-webkit-text-stroke:0.35px #3a3a3a;transform:scaleX(0.8953);transform-origin:-0.0px 0;">USD 8,100,000</span>
<span class="t" id="t76" style="left:640.50px;top:522.11px;font-size:9.5px;font-weight:400;color:#3a3a3a;-webkit-text-stroke:0.35px #3a3a3a;transform:scaleX(0.9033);transform-origin:-0.0px 0;">Jul 1, 2024 - Feb 17, 2025</span>
<span class="t" id="t77" style="left:640.50px;top:533.81px;font-size:8.3px;font-weight:400;color:#555555;-webkit-text-stroke:0.1px #555555;transform:scaleX(0.9024);transform-origin:-0.0px 0;">231 days</span>
<span class="t" id="t78" style="left:799.00px;top:526.71px;font-size:9.5px;font-weight:400;color:#444444;-webkit-text-stroke:0.1px #444444;transform:scaleX(0.9329);transform-origin:-0.0px 0;">May 19, 2024</span>
</body></html>
